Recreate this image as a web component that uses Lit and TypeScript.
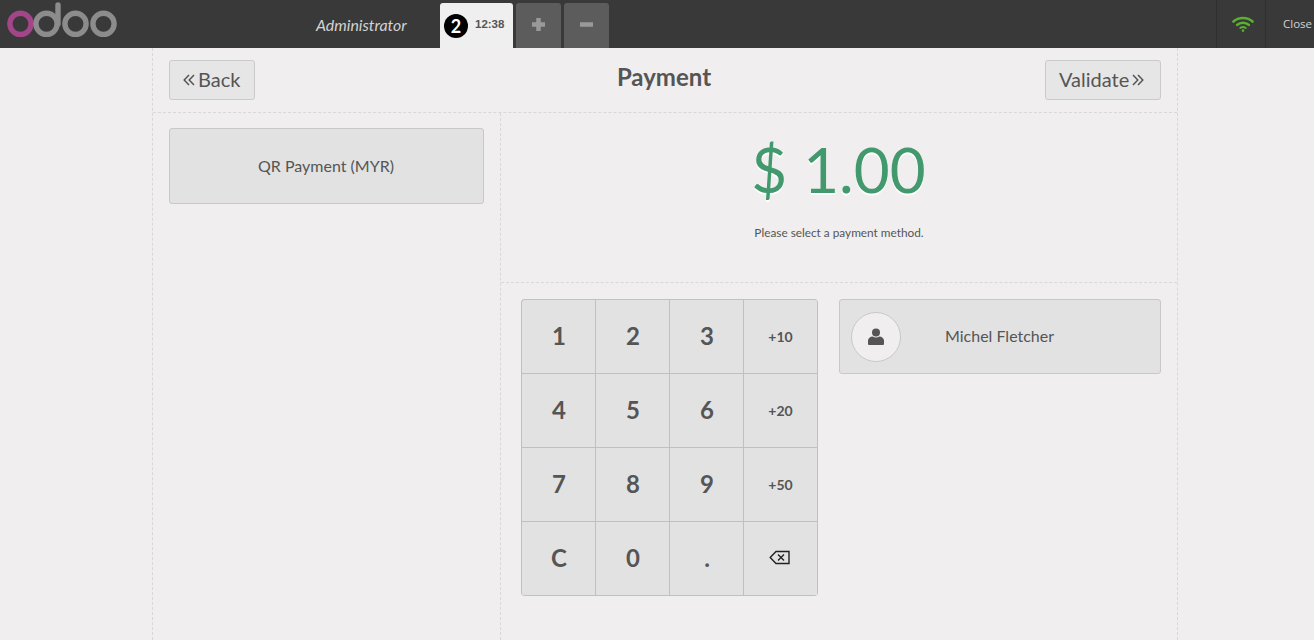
import { LitElement, html, css, svg } from "lit";
import { customElement } from "lit/decorators.js";

const chevL = svg`<svg class="chev" width="12" height="14" viewBox="0 0 12 14"><path d="M6 2 1.200 7 6 12M11 2 6.200 7 11 12" fill="none" stroke="#555" stroke-width="1.5"/></svg>`;
const chevR = svg`<svg class="chev" width="12" height="14" viewBox="0 0 12 14"><path d="M1 2 5.800 7 1 12M6 2 10.800 7 6 12" fill="none" stroke="#555" stroke-width="1.5"/></svg>`;

@customElement("app-root")
export class AppRoot extends LitElement {
  static styles = css`
    :host { display: block; height: 640px; overflow: hidden; background: #f0eeee; font-family: Lato, sans-serif; color: #555; }
    .top { height: 48px; background: #393939; display: flex; align-items: stretch; }
    .logo { margin-left: 7px; width: 111px; height: 48px; flex: none; }
    .user { margin-left: 198px; width: 124px; font-size: 15.9px; font-style: italic; color: #d3d3d3; line-height: 49px; text-align: left; white-space: nowrap; }
    .tabs { display: flex; gap: 3px; padding-top: 3px; }
    .tab { width: 73px; height: 45px; background: #efefef; border-radius: 3px 3px 0 0; display: flex; align-items: center; box-sizing: border-box; padding-left: 4px; }
    .num { width: 24px; height: 24px; border-radius: 50%; background: #000; color: #fff; font: 700 18px/24px Lato, sans-serif; text-align: center; }
    .time { margin-left: 7px; font: 700 11.5px "Liberation Sans", sans-serif; color: #555; margin-top: -4px; }
    .act { width: 45px; height: 45px; background: #5c5c5c; border-radius: 3px 3px 0 0; display: flex; align-items: center; justify-content: center; padding-bottom: 2px; box-sizing: border-box; }
    .status { margin-left: auto; display: flex; }
    .wifi { width: 48px; box-sizing: content-box; border-left: 1px solid #2f2f2f; border-right: 1px solid #2f2f2f; display: flex; align-items: center; justify-content: center; }
    .wifi svg { margin-left: 4px; }
    .close { width: 48px; box-sizing: border-box; padding-left: 17px; font: 11.5px/48px "Open Sans", sans-serif; color: #d3d3d3; white-space: nowrap; }
    .screen { margin-left: 152px; width: 1026px; height: 592px; box-sizing: border-box; border-left: 1px dashed #d8d8d8; border-right: 1px dashed #d8d8d8; display: flex; flex-direction: column; }
    .head { height: 65px; box-sizing: border-box; border-bottom: 1px dashed #d8d8d8; padding: 12px 16px 0; display: flex; align-items: flex-start; justify-content: space-between; position: relative; }
    h1 { position: absolute; left: -2px; right: 0; top: 14px; margin: 0; text-align: center; font-size: 24px; line-height: 30px; font-weight: 700; color: #555; }
    .btn { height: 40px; box-sizing: border-box; background: #e6e6e6; border: 1px solid #cacaca; border-radius: 3px; font-size: 20px; display: flex; align-items: center; color: #555; gap: 3px; padding-bottom: 2px; }
    .back { width: 86px; padding-left: 13px; }
    .val { width: 116px; padding-left: 13px; }
    .chev { margin-top: 2px; }
    .body { flex: 1; display: flex; min-height: 0; }
    .left { width: 348px; box-sizing: border-box; border-right: 1px dashed #d8d8d8; padding: 15px 16px; }
    .method { height: 76px; box-sizing: border-box; background: #e2e2e2; border: 1px solid #c8c8c8; border-radius: 3px; font-size: 16px; display: flex; align-items: center; justify-content: center; color: #555; padding: 0 1px 2px 0; }
    .right { flex: 1; display: flex; flex-direction: column; }
    .due { height: 170px; box-sizing: border-box; border-bottom: 1px dashed #d8d8d8; text-align: center; }
    .amount { font-size: 62px; line-height: 80px; padding: 16px 1px 0 0; color: #43996e; text-shadow: 0 2px #fff; }
    .hint { font-size: 11.8px; line-height: 16px; margin-top: 16px; color: #555; }
    .lower { display: flex; padding: 16px 16px 0 20px; align-items: flex-start; gap: 21px; }
    .pad { display: grid; grid-template-columns: repeat(4, 74px); grid-auto-rows: 74px; border-left: 1px solid #c0c0c0; border-top: 1px solid #c0c0c0; border-radius: 4px; overflow: hidden; background: #e2e2e2; }
    .key { box-sizing: border-box; border-right: 1px solid #c0c0c0; border-bottom: 1px solid #c0c0c0; display: flex; align-items: center; justify-content: center; font-size: 24px; font-weight: 700; color: #555; padding: 0 0 2px 1px; }
    .key.small { font-size: 14px; padding: 0; }
    .key.icon { padding: 0 2px 2px 0; }
    .client { width: 322px; height: 75px; box-sizing: border-box; background: #e2e2e2; border: 1px solid #c8c8c8; border-radius: 3px; display: flex; align-items: center; padding-left: 11px; font-size: 16px; color: #555; }
    .client span { margin-bottom: 2px; }
    .avatar { width: 50px; height: 50px; box-sizing: border-box; border-radius: 50%; background: #f0eeee; border: 1px solid #c8c8c8; display: flex; align-items: center; justify-content: center; margin-right: 44px; flex: none; }
  `;

  render() {
    const keys = ["1","2","3","+10","4","5","6","+20","7","8","9","+50","C","0","."];
    return html`
      <div class="top">
        <svg class="logo" viewBox="0 0 111 48">
          <g fill="none" stroke-width="5.4">
            <circle cx="13.5" cy="23.8" r="10.6" stroke="#a24689"/>
            <g stroke="#8c8c8c">
              <circle cx="39.5" cy="23.8" r="10.6"/>
              <path d="M51 5v19" stroke-linecap="round"/>
              <circle cx="68.5" cy="23.8" r="10.6"/>
              <circle cx="96.5" cy="23.8" r="10.6"/>
            </g>
          </g>
        </svg>
        <div class="user">Administrator</div>
        <div class="tabs">
          <div class="tab"><span class="num">2</span><span class="time">12:38</span></div>
          <div class="act"><svg width="15" height="15" viewBox="0 0 15 15"><path d="M7.5 1v13M1 7.500h13" stroke="#999" stroke-width="4.5"/></svg></div>
          <div class="act"><svg width="15" height="15" viewBox="0 0 15 15"><path d="M1 7.500h13" stroke="#999" stroke-width="4.5"/></svg></div>
        </div>
        <div class="status">
          <div class="wifi">
            <svg width="22" height="16" viewBox="0 0 22 16" fill="none" stroke="#5ab030" stroke-linecap="round">
              <path d="M1.500 5.500C6.500.9 15.500.9 20.500 5.500" stroke-width="2.6"/>
              <path d="M5 9c3.400-3 8.600-3 12 0" stroke-width="2.4"/>
              <path d="M8.200 12c1.700-1.300 3.900-1.300 5.600 0" stroke-width="2"/>
              <circle cx="11" cy="14.600" r="1.300" fill="#5ab030" stroke="none"/>
            </svg>
          </div>
          <div class="close">Close</div>
        </div>
      </div>
      <div class="screen">
        <div class="head">
          <div class="btn back">${chevL}<span>Back</span></div>
          <h1>Payment</h1>
          <div class="btn val"><span>Validate</span>${chevR}</div>
        </div>
        <div class="body">
          <div class="left"><div class="method">QR Payment (MYR)</div></div>
          <div class="right">
            <div class="due">
              <div class="amount">$ 1.00</div>
              <div class="hint">Please select a payment method.</div>
            </div>
            <div class="lower">
              <div class="pad">
                ${keys.map(k => html`<div class="key ${k.startsWith("+") ? "small" : ""}">${k}</div>`)}
                <div class="key icon">
                  <svg width="21" height="15" viewBox="0 0 21 15" fill="none" stroke="#222" stroke-width="1.4"><path d="M20 1.500H7L1.200 7.500 7 13.500h13z"/><path d="M9 4.500l6 6M15 4.500l-6 6"/></svg>
                </div>
              </div>
              <div class="client">
                <div class="avatar">
                  <svg width="16" height="18" viewBox="0 0 16 18" fill="#555"><circle cx="8" cy="4.600" r="4"/><path d="M1 17a1 1 0 0 1-1-1v-3.500C0 10 2.400 8.600 4.600 8.400c2 1.300 4.800 1.300 6.800 0C13.600 8.600 16 10 16 12.500V16a1 1 0 0 1-1 1z"/></svg>
                </div>
                <span>Michel Fletcher</span>
              </div>
            </div>
          </div>
        </div>
      </div>
    `;
  }
}
